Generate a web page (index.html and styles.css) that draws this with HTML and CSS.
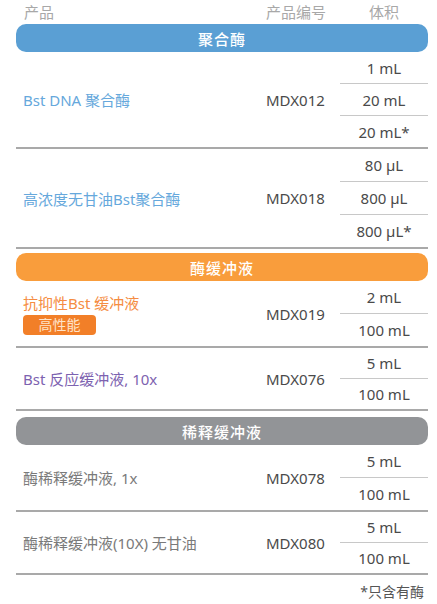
FILE: index.html
```html
<!DOCTYPE html>
<html lang="zh">
<head>
<meta charset="utf-8">
<link rel="stylesheet" href="styles.css">
</head>
<body>
<div class="table">
  <div class="head">
    <div class="c-name">产品</div>
    <div class="c-code">产品编号</div>
    <div class="c-vol">体积</div>
  </div>

  <div class="bar bar-blue">聚合酶</div>
  <div class="row r31">
    <div class="c-name name-blue">Bst DNA 聚合酶</div>
    <div class="c-code">MDX012</div>
    <div class="c-vol vols"><div class="v">1 mL</div><div class="v">20 mL</div><div class="v">20 mL*</div></div>
  </div>
  <div class="row r32">
    <div class="c-name name-blue">高浓度无甘油Bst聚合酶</div>
    <div class="c-code">MDX018</div>
    <div class="c-vol vols"><div class="v">80 µL</div><div class="v">800 µL</div><div class="v">800 µL*</div></div>
  </div>

  <div class="bar bar-orange">酶缓冲液</div>
  <div class="row r32">
    <div class="c-name name-orange">
      <div>抗抑性Bst 缓冲液</div>
      <span class="badge">高性能</span>
    </div>
    <div class="c-code">MDX019</div>
    <div class="c-vol vols"><div class="v">2 mL</div><div class="v">100 mL</div></div>
  </div>
  <div class="row r30">
    <div class="c-name name-purple">Bst 反应缓冲液, 10x</div>
    <div class="c-code">MDX076</div>
    <div class="c-vol vols"><div class="v">5 mL</div><div class="v">100 mL</div></div>
  </div>

  <div class="bar bar-gray">稀释缓冲液</div>
  <div class="row r32">
    <div class="c-name name-gray">酶稀释缓冲液, 1x</div>
    <div class="c-code">MDX078</div>
    <div class="c-vol vols"><div class="v">5 mL</div><div class="v">100 mL</div></div>
  </div>
  <div class="row r30">
    <div class="c-name name-gray">酶稀释缓冲液(10X) 无甘油</div>
    <div class="c-code">MDX080</div>
    <div class="c-vol vols"><div class="v">5 mL</div><div class="v">100 mL</div></div>
  </div>
  <div class="note">*只含有酶</div>
</div>
</body>
</html>
```

FILE: styles.css
```css
html, body {
  margin: 0;
  padding: 0;
  background: #ffffff;
}
body {
  font-family: "Noto Sans", "Noto Sans CJK SC", sans-serif;
  font-size: 15px;
  color: #4a4a4a;
}
.table {
  width: 412px;
  margin-left: 16px;
}
.head, .row {
  display: grid;
  grid-template-columns: 250px 74px 88px;
}
.head {
  height: 24px;
  align-items: center;
  color: #a8a8a8;
  font-size: 15px;
  line-height: 1;
}
.head .c-name { padding-left: 8px; }
.c-code { text-align: left; }
.c-vol { text-align: center; }
.bar {
  height: 28px;
  border-radius: 10px;
  color: #fff;
  font-weight: 500;
  font-size: 15px;
  display: flex;
  align-items: center;
  justify-content: center;
  letter-spacing: 1px;
}
.bar-blue { background: #5a9fd4; }
.bar-orange { background: #f99d3c; margin-top: 4px; }
.bar-gray { background: #929497; margin-top: 6px; }
.row {
  border-bottom: 2px solid #a9a9a9;
  align-items: center;
}
.row .c-name {
  padding-left: 7px;
}
.row .c-code {
  color: #4a4a4a;
}
.vols {
  display: flex;
  flex-direction: column;
  color: #4a4a4a;
}
.vols .v {
  height: var(--h);
  display: flex;
  align-items: center;
  justify-content: center;
}
.vols .v + .v { border-top: 1px solid #c8c8c8; }
.r30 { --h: 30px; }
.r31 { --h: 31px; }
.r32 { --h: 32px; }
.name-blue { color: #66a8dc; }
.name-orange { color: #f58c42; }
.name-purple { color: #7d62b0; }
.name-gray { color: #7a7a7a; }
.badge {
  display: inline-block;
  margin-top: 2px;
  width: 73px;
  height: 20px;
  line-height: 20px;
  text-align: center;
  background: #f27f28;
  color: #ffe3c8;
  border-radius: 4px;
  font-size: 14px;
}
.note {
  text-align: right;
  padding: 6px 4px 0 0;
  font-size: 14px;
  color: #555;
}
```
